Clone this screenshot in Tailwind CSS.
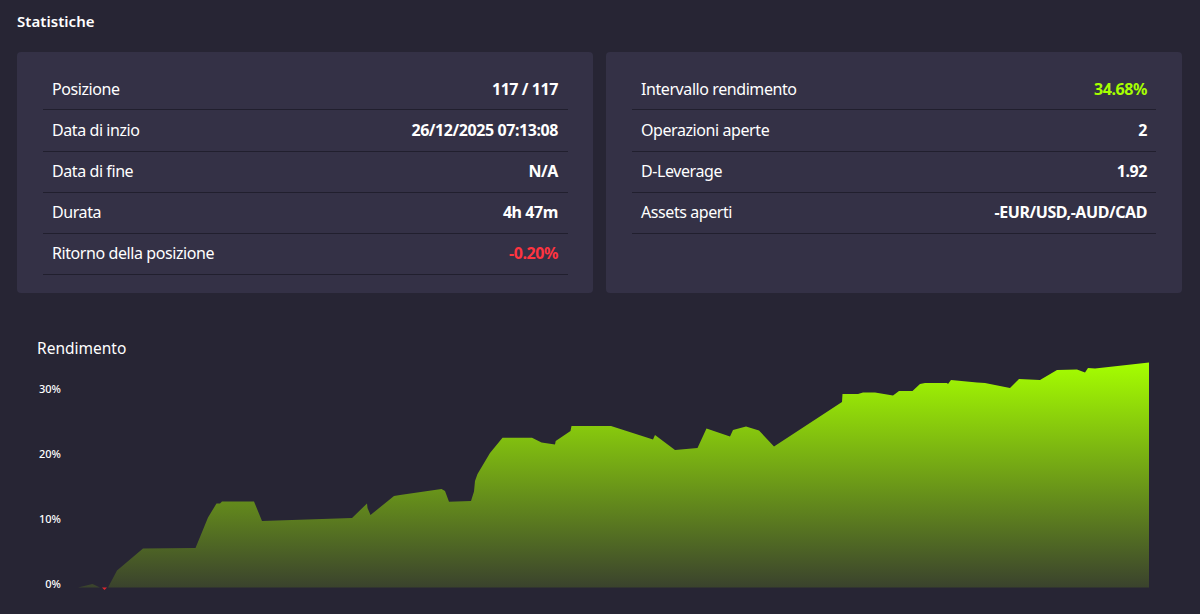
<!DOCTYPE html>
<html lang="it">
<head>
    <meta charset="UTF-8" />
    <title>Statistiche</title>
    <script src="https://cdn.jsdelivr.net/npm/@tailwindcss/browser@4"></script>
</head>
<body class="bg-[#272534] text-white font-['Noto_Sans',sans-serif] h-[614px] overflow-hidden">

    <div class="pl-[17px] pr-[18px]">
        <h2 class="h-[52px] pt-[11px] text-[15px] leading-[20px] font-semibold tracking-[0.05px]">Statistiche</h2>

        <div class="grid grid-cols-2 gap-[13px]">
            <!-- Posizione -->
            <div class="bg-[#343146] rounded-[4px] h-[241px] pl-[26px] pr-[25px] pt-[16px] text-[16px] tracking-[-0.42px]">
                <div class="h-[42px] flex items-center justify-between pl-[9px] pr-[10px] border-b border-[#211f2e]">
                    <span>Posizione</span><span class="font-bold tracking-[-0.42px]">117 / 117</span>
                </div>
                <div class="h-[42px] pb-[2px] flex items-center justify-between pl-[9px] pr-[10px] border-b border-[#211f2e]">
                    <span>Data di inzio</span><span class="font-bold tracking-[-0.42px]">26/12/2025 07:13:08</span>
                </div>
                <div class="h-[41px] pb-[2px] flex items-center justify-between pl-[9px] pr-[10px] border-b border-[#211f2e]">
                    <span>Data di fine</span><span class="font-bold tracking-[-0.42px]">N/A</span>
                </div>
                <div class="h-[41px] pb-[2px] flex items-center justify-between pl-[9px] pr-[10px] border-b border-[#211f2e]">
                    <span>Durata</span><span class="font-bold tracking-[-0.42px]">4h 47m</span>
                </div>
                <div class="h-[41px] pb-[2px] flex items-center justify-between pl-[9px] pr-[10px] border-b border-[#211f2e]">
                    <span>Ritorno della posizione</span><span class="font-bold tracking-[-0.42px] text-[#ff3440]">-0.20%</span>
                </div>
            </div>

            <!-- Rendimento -->
            <div class="bg-[#343146] rounded-[4px] h-[241px] px-[26px] pt-[16px] text-[16px] tracking-[-0.42px]">
                <div class="h-[42px] flex items-center justify-between px-[9px] border-b border-[#211f2e]">
                    <span>Intervallo rendimento</span><span class="font-bold tracking-[-0.42px] text-[#a6ff00]">34.68%</span>
                </div>
                <div class="h-[42px] pb-[2px] flex items-center justify-between px-[9px] border-b border-[#211f2e]">
                    <span>Operazioni aperte</span><span class="font-bold tracking-[-0.42px]">2</span>
                </div>
                <div class="h-[41px] pb-[2px] flex items-center justify-between px-[9px] border-b border-[#211f2e]">
                    <span>D-Leverage</span><span class="font-bold tracking-[-0.42px]">1.92</span>
                </div>
                <div class="h-[41px] pb-[2px] flex items-center justify-between px-[9px] border-b border-[#211f2e]">
                    <span>Assets aperti</span><span class="font-bold tracking-[-0.42px]">-EUR/USD,-AUD/CAD</span>
                </div>
            </div>
        </div>
    </div>

    <!-- Grafico: viewBox parte da y=293, dove finiscono le card -->
    <svg class="block" width="1200" height="321" viewBox="0 293 1200 321">
        <defs>
            <linearGradient id="area" gradientUnits="userSpaceOnUse" x1="0" y1="362" x2="0" y2="588">
                <stop offset="0" stop-color="#a6ff00" />
                <stop offset="1" stop-color="#3a422d" />
            </linearGradient>
        </defs>
        <text x="37" y="354" fill="#fff" font-size="15.5">Rendimento</text>
        <g fill="#fff" font-size="11" font-weight="500" text-anchor="end">
            <text x="61" y="393">30%</text>
            <text x="61" y="458">20%</text>
            <text x="61" y="523">10%</text>
            <text x="61" y="588">0%</text>
        </g>
        <polygon fill="#e0262f" points="102,587.5 107,587.5 104.5,590" />
        <polygon fill="url(#area)" points="78,587.5 92.5,584 100,587.5 108,587.5 117,570.5 143,548.5 195.5,548 208,517.5 216.5,503.5 220,503.5 222,501.5 254,501.5 262,521 352,518 367,503.5 367.5,508 370.5,515 394,496 400,495 441.5,489 445,491 449,501.7 471,501 474,491.5 475,481 477.5,474 490,453 502.5,437.7 532,437.7 541.5,442.5 555,444.5 555.7,441 570.5,431 571.5,426 611,426 653,439.5 655,435 675,450 697.5,448 706.5,428.5 730,436.5 733,430 746,426.5 759,430.5 774,446.5 800,429.5 842,402 842.5,394 858,394 863,392.5 875,392.5 893,395.5 899,391 912.5,391 920,384 925,383 947,383 948,384 951,380 977,382.5 985,383 1010,388 1019,379 1040,380 1057,370 1077,369.5 1085,372.5 1088,368 1095,368.5 1149,362.5 1149,587.5" />
    </svg>

</body>
</html>
